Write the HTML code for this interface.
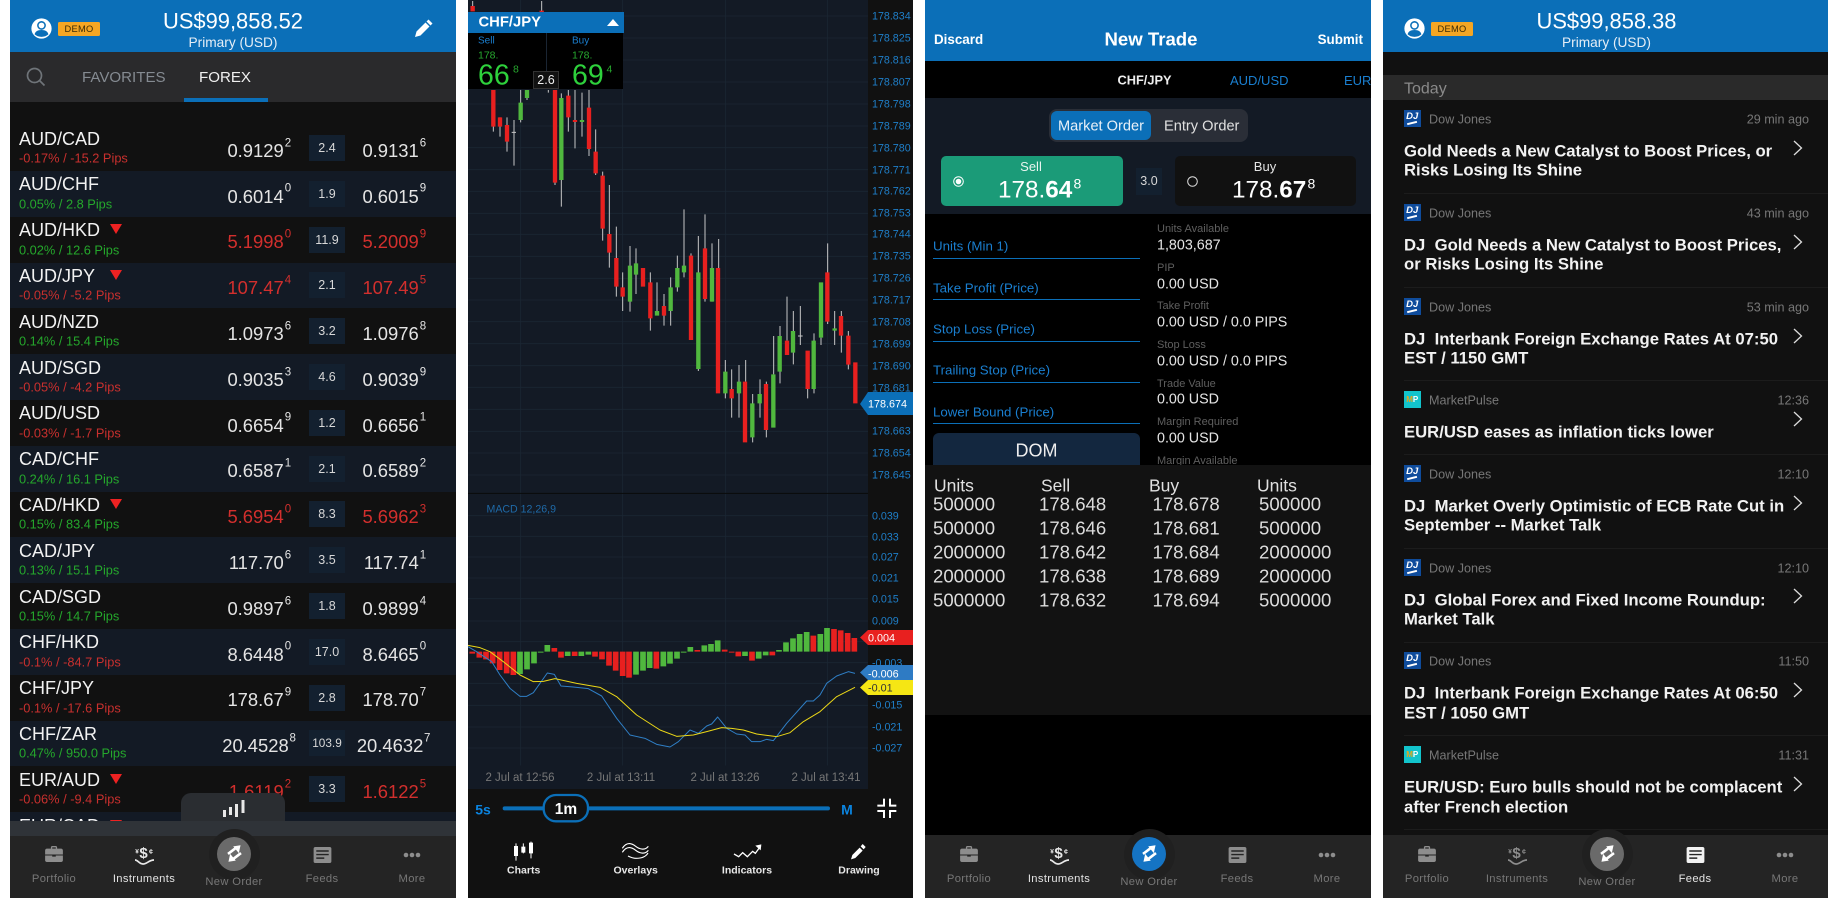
<!DOCTYPE html>
<html lang="en"><head><meta charset="utf-8"><title>Trading app screens</title>
<style>
*{box-sizing:border-box;margin:0;padding:0}
html,body{width:1834px;height:898px;overflow:hidden;background:#fff;font-family:"Liberation Sans",sans-serif}
.pn{position:absolute;top:0;height:898px;overflow:hidden;background:#111}
.t{position:absolute;white-space:nowrap;line-height:1;transform:translateY(calc(-50% + .7px))}
.c{position:absolute;white-space:nowrap;line-height:1;transform:translate(-50%,calc(-50% + .7px))}
.b{position:absolute}
svg{position:absolute;overflow:visible}
.hd{position:absolute;left:0;top:0;width:100%;height:52px;background:#0b6fb8}
.bal{left:223px;top:21px;font-size:21.9px;color:#fff}
.acc{left:223px;top:41.7px;font-size:13.7px;color:#e6eef6}
.demo{position:absolute;left:48px;top:21.5px;width:42px;height:14px;background:#f5a623;border-radius:1.5px;color:#3a2b06;font-size:9.3px;line-height:14px;text-align:center;letter-spacing:.3px}
.r{position:absolute;left:0;width:446px;height:45.8px;background:#111}
.r.a{background:#131a25}
.r .n{position:absolute;left:9px;top:13.4px;font-size:18px;color:#f2f2f2;line-height:1;transform:translateY(-50%);white-space:nowrap}
.r .s{position:absolute;left:9px;top:33.8px;font-size:12.8px;line-height:1;transform:translateY(-50%);white-space:nowrap}
.dn{color:#c9302e}.up{color:#25a82c}
.r .p{position:absolute;top:25.6px;font-size:18.4px;color:#e4e4e4;line-height:1;transform:translateY(-50%);white-space:nowrap}
.r .p1{right:172.3px}.r .p2{right:37.3px}
.r .u{position:absolute;top:18.4px;font-size:11.5px;color:#e4e4e4;line-height:1;transform:translateY(-50%)}
.r .u1{left:274.7px}.r .u2{left:409.7px}
.r .x{position:absolute;left:299px;top:9.8px;width:36px;height:26px;background:#13202f;color:#d8d8d8;font-size:12.5px;line-height:26px;text-align:center}
.r.red .p,.r.red .u{color:#d22f2d}
.r .tri{position:absolute;left:100px;top:7.5px;width:0;height:0;border-left:6.2px solid transparent;border-right:6.2px solid transparent;border-top:10.5px solid #ee2222}
.nav{position:absolute;left:0;top:835px;width:100%;height:63px;background:#242424}
.lb{font-size:11.2px;letter-spacing:.35px;color:#777;top:879px}
.ax{position:absolute;left:404px;font-size:10.7px;color:#1f7fc9;line-height:1;transform:translateY(calc(-50% + 1px))}
.ti{font-size:11.5px;color:#777;top:778px}
.tool{font-size:10.5px;font-weight:bold;color:#e8e8e8;top:870px}
.fl{font-size:13.3px;color:#1a7fd0;left:8px;transform:translateY(-50%)}
.ul{position:absolute;left:8px;width:207px;height:1.5px;background:#0b6fb8}
.il{font-size:11px;color:#5f5f5f;left:232px}
.iv{font-size:14.3px;color:#e4e4e4;left:232px}
.dh{font-size:17.5px;color:#e0e0e0;top:486px;transform:translateY(-50%)}
.dv{font-size:18.6px;color:#dcdcdc;transform:translateY(-50%)}
.src{font-size:12.6px;color:#777}
.tm{font-size:12.6px;color:#777;right:19px}
.nt{font-size:16.7px;font-weight:bold;color:#f2f2f2;left:21px}
.sep{position:absolute;left:21px;right:0;height:1px;background:#1c1c1c}
.dj{position:absolute;left:21px;width:16.5px;height:17px;background:#0f4c9c;color:#fff;font:italic bold 9.5px/13px "Liberation Sans",sans-serif;text-align:center}
.dj::after{content:"";position:absolute;left:3px;top:11.5px;width:10px;height:1.5px;background:#fff;transform:rotate(-14deg)}
.mp{position:absolute;left:21px;width:16.5px;height:17px;background:#12c4cc;color:#fff;font:bold 8px/17px "Liberation Sans",sans-serif;text-align:center}
.mp i{font-style:normal;color:#e8a41c}
</style></head><body>

<svg width="0" height="0" style="position:absolute"><defs>
<symbol id="case" viewBox="0 0 20 18"><path fill="currentColor" d="M6.5 3V1.6C6.5.7 7.2 0 8 0h4c.8 0 1.5.7 1.5 1.6V3H18c1.100 0 2 .9 2 2v4.500H0V5c0-1.100.9-2 2-2zM8 3h4V1.600H8zM0 10.700h8V12h4v-1.300h8V16c0 1.100-.9 2-2 2H2c-1.100 0-2-.9-2-2z"/></symbol>
<symbol id="arr" viewBox="0 0 22 22"><path fill="none" stroke="#fff" stroke-width="3" d="M3.500 11.500L12 5M18.500 10.500L10 17"/><path fill="#fff" d="M18 1.500L16 10.500 9.500 2.800zM4 20.500L6 11.500 12.500 19.200z"/></symbol>
<symbol id="feed" viewBox="0 0 20 18"><rect width="20" height="18" rx="2" fill="currentColor"/><path d="M3 4.500h14M3 8.500h14M3 12.500h9" stroke="#242424" stroke-width="1.600"/></symbol>
<symbol id="usr" viewBox="0 0 22 22"><circle cx="11" cy="11" r="10.600" fill="#fff"/><circle cx="11" cy="7.800" r="3.800" fill="#fff" stroke="#0b6fb8" stroke-width="1.600"/><path d="M3.800 17.200c.6-3 3-4.600 7.200-4.600s6.600 1.600 7.200 4.600c-1.800 1.600-4.400 2.600-7.200 2.600s-5.400-1-7.200-2.600z" fill="#0b6fb8"/></symbol>
<symbol id="bars" viewBox="0 0 24 18"><path d="M1.500 10v7M7.500 7v8M13.500 4v13M20 0v13" stroke="#e8e8e8" stroke-width="3" fill="none"/></symbol>
</defs></svg>

<!-- PANEL 1 -->
<div class="pn" style="left:10px;width:446px;background:#111">
<div class="hd"></div>
<svg style="left:20.500px;top:17.500px" width="21" height="21"><use href="#usr" width="21" height="21"/></svg>
<div class="demo">DEMO</div>
<div class="c bal">US$99,858.52</div>
<div class="c acc">Primary (USD)</div>
<svg style="left:404px;top:18px" width="20" height="20" viewBox="0 0 20 20"><path fill="#fff" d="M14.500 1.500l4 4-2 2-4-4zM11.500 4.500l4 4-9 9-5.500 1.500 1.500-5.500z"/></svg>
<div class="b" style="left:0;top:52px;width:446px;height:50px;background:#2a2a2c"></div>
<svg style="left:16px;top:67px" width="20" height="20" viewBox="0 0 20 20" fill="none" stroke="#6f7479" stroke-width="1.700"><circle cx="8.500" cy="8.500" r="7"/><path d="M13.500 13.500l5 5"/></svg>
<div class="t" style="left:72px;top:77px;font-size:15.100px;color:#858b92">FAVORITES</div>
<div class="t" style="left:189px;top:77px;font-size:15.100px;color:#f0f0f0">FOREX</div>
<div class="b" style="left:174px;top:98px;width:84px;height:4px;background:#0b6fb8"></div>

<div class="r" style="top:125.200px"><div class="n">AUD/CAD</div><div class="s dn">-0.17% / -15.2 Pips</div><div class="p p1">0.9129</div><div class="u u1">2</div><div class="x">2.4</div><div class="p p2">0.9131</div><div class="u u2">6</div></div>
<div class="r a" style="top:171px"><div class="n">AUD/CHF</div><div class="s up">0.05% / 2.8 Pips</div><div class="p p1">0.6014</div><div class="u u1">0</div><div class="x">1.9</div><div class="p p2">0.6015</div><div class="u u2">9</div></div>
<div class="r red" style="top:216.800px"><div class="n">AUD/HKD</div><div class="tri"></div><div class="s up">0.02% / 12.6 Pips</div><div class="p p1">5.1998</div><div class="u u1">0</div><div class="x">11.9</div><div class="p p2">5.2009</div><div class="u u2">9</div></div>
<div class="r a red" style="top:262.600px"><div class="n">AUD/JPY</div><div class="tri"></div><div class="s dn">-0.05% / -5.2 Pips</div><div class="p p1">107.47</div><div class="u u1">4</div><div class="x">2.1</div><div class="p p2">107.49</div><div class="u u2">5</div></div>
<div class="r" style="top:308.400px"><div class="n">AUD/NZD</div><div class="s up">0.14% / 15.4 Pips</div><div class="p p1">1.0973</div><div class="u u1">6</div><div class="x">3.2</div><div class="p p2">1.0976</div><div class="u u2">8</div></div>
<div class="r a" style="top:354.200px"><div class="n">AUD/SGD</div><div class="s dn">-0.05% / -4.2 Pips</div><div class="p p1">0.9035</div><div class="u u1">3</div><div class="x">4.6</div><div class="p p2">0.9039</div><div class="u u2">9</div></div>
<div class="r" style="top:400px"><div class="n">AUD/USD</div><div class="s dn">-0.03% / -1.7 Pips</div><div class="p p1">0.6654</div><div class="u u1">9</div><div class="x">1.2</div><div class="p p2">0.6656</div><div class="u u2">1</div></div>
<div class="r a" style="top:445.800px"><div class="n">CAD/CHF</div><div class="s up">0.24% / 16.1 Pips</div><div class="p p1">0.6587</div><div class="u u1">1</div><div class="x">2.1</div><div class="p p2">0.6589</div><div class="u u2">2</div></div>
<div class="r red" style="top:491.600px"><div class="n">CAD/HKD</div><div class="tri"></div><div class="s up">0.15% / 83.4 Pips</div><div class="p p1">5.6954</div><div class="u u1">0</div><div class="x">8.3</div><div class="p p2">5.6962</div><div class="u u2">3</div></div>
<div class="r a" style="top:537.400px"><div class="n">CAD/JPY</div><div class="s up">0.13% / 15.1 Pips</div><div class="p p1">117.70</div><div class="u u1">6</div><div class="x">3.5</div><div class="p p2">117.74</div><div class="u u2">1</div></div>
<div class="r" style="top:583.200px"><div class="n">CAD/SGD</div><div class="s up">0.15% / 14.7 Pips</div><div class="p p1">0.9897</div><div class="u u1">6</div><div class="x">1.8</div><div class="p p2">0.9899</div><div class="u u2">4</div></div>
<div class="r a" style="top:629px"><div class="n">CHF/HKD</div><div class="s dn">-0.1% / -84.7 Pips</div><div class="p p1">8.6448</div><div class="u u1">0</div><div class="x">17.0</div><div class="p p2">8.6465</div><div class="u u2">0</div></div>
<div class="r" style="top:674.800px"><div class="n">CHF/JPY</div><div class="s dn">-0.1% / -17.6 Pips</div><div class="p p1">178.67</div><div class="u u1">9</div><div class="x">2.8</div><div class="p p2">178.70</div><div class="u u2">7</div></div>
<div class="r a" style="top:720.600px"><div class="n">CHF/ZAR</div><div class="s up">0.47% / 950.0 Pips</div><div class="p p1" style="right:167.300px">20.4528</div><div class="u u1" style="left:279.500px">8</div><div class="x" style="font-size:11.800px">103.9</div><div class="p p2" style="right:32.700px">20.4632</div><div class="u u2" style="left:414px">7</div></div>
<div class="r red" style="top:766.400px"><div class="n">EUR/AUD</div><div class="tri"></div><div class="s dn">-0.06% / -9.4 Pips</div><div class="p p1">1.6119</div><div class="u u1">2</div><div class="x">3.3</div><div class="p p2">1.6122</div><div class="u u2">5</div></div>
<div class="r a" style="top:812.200px"><div class="n">EUR/CAD</div><div class="tri"></div></div>

<div class="b" style="left:171px;top:793px;width:104px;height:29px;background:#2a2d31;border-radius:10px 10px 0 0"></div>
<svg style="left:212.500px;top:800px" width="24" height="18"><use href="#bars" width="24" height="18"/></svg>
<div class="b" style="left:0;top:821px;width:446px;height:15px;background:#2f3338"></div>
<div class="nav" style="top:836px"></div>
<svg style="left:35px;top:846px;color:#8d8d8d" width="18" height="16"><use href="#case" width="18" height="16"/></svg>
<div class="c" style="left:133.500px;top:853px;font-size:15px;font-weight:bold;color:#e8e8e8">$</div>
<div class="c" style="left:127px;top:852px;font-size:6.500px;font-weight:bold;color:#e8e8e8">¥</div>
<div class="c" style="left:141px;top:852px;font-size:7px;font-weight:bold;color:#e8e8e8">¢</div>
<svg style="left:124.500px;top:858px" width="20" height="9" viewBox="0 0 20 9" fill="none" stroke="#e8e8e8" stroke-width="1.700"><path d="M0 2c3 0 4 4 8 4s6-4 11-4"/></svg>
<div class="c lb" style="left:134px;color:#e4e4e4">Instruments</div>
<div class="b" style="left:198.500px;top:829px;width:51px;height:51px;border-radius:50%;background:#202020"></div>
<div class="b" style="left:207px;top:836.500px;width:34px;height:34px;border-radius:50%;background:#6a6a6a"></div>
<svg style="left:214.500px;top:844px" width="19" height="19"><use href="#arr" width="19" height="19"/></svg>
<div class="c lb" style="left:44px">Portfolio</div>
<div class="c lb" style="left:224px;top:882px">New Order</div>
<svg style="left:303px;top:847px;color:#8d8d8d" width="19" height="16"><use href="#feed" width="19" height="16"/></svg>
<div class="c lb" style="left:312px">Feeds</div>
<svg style="left:393px;top:852px" width="18" height="6" fill="#8d8d8d"><circle cx="3" cy="3" r="2.300"/><circle cx="9" cy="3" r="2.300"/><circle cx="15" cy="3" r="2.300"/></svg>
<div class="c lb" style="left:402px">More</div>
</div>

<!-- PANEL 2 -->
<div class="pn" style="left:468px;width:445px;background:#111">
<div class="b" style="left:0;top:0;width:400px;height:789px;background:#131a25"></div>
<svg style="left:-8px;top:0" width="470" height="898" viewBox="0 0 1410 2694">
<defs><clipPath id="cl"><rect x="24" y="0" width="1200" height="2297"/></clipPath></defs>
<g clip-path="url(#cl)">
<path fill="none" stroke="#1b2633" stroke-width="2.500" d="M182 0V2297M488 0V2297M797 0V2297M1102 0V2297M24 48H1224M24 114H1224M24 180H1224M24 246H1224M24 312H1224M24 378H1224M24 443H1224M24 509H1224M24 574H1224M24 640H1224M24 703H1224M24 769H1224M24 835H1224M24 900H1224M24 965H1224M24 1031H1224M24 1097H1224M24 1162H1224M24 1228H1224M24 1294H1224M24 1359H1224M24 1425H1224M24 1547H1224M24 1609H1224M24 1671H1224M24 1734H1224M24 1796H1224M24 1863H1224M24 1925H1224M24 1988H1224M24 2050H1224M24 2116H1224M24 2181H1224M24 2244H1224"/>
<path fill="none" stroke="#0a0a0a" stroke-width="3" d="M24 1480H1224"/>
<path fill="none" stroke="#c6c6c6" stroke-width="3" d="M38 3V18M245 3V35M100 270V395M120 352V410M141 352V455M162 360V497M182 270V367M201 270V300M265 270V278M285 270V555M304 280V620M325 270V395M345 270V445M366 278V410M387 270V468M407 388V525M428 515V722M448 555V803M469 680V890M488 817V933M510 738V935M528 745V882M571 817V992M591 847V935M612 882V977M632 832V977M652 767V875M672 628V832M693 760V1020M715 708V1113M735 643V905M756 730V905M776 717V810M796 1080V1195M815 1108V1253M837 1095V1253M857 1080V1145M878 1182V1327M900 1138V1253M919 1145V1312M941 1008V1123M960 978V1150M981 890V1022M1000 933V1093M1021 918V1035M1043 1167V1195M1062 1000V1180M1083 1013V1035M1103 730V972M1124 933V1035M1144 933V1058M1165 993V1108M155 397H168M1014 1008H1028"/>
<path fill="none" stroke="#e8201f" stroke-width="13" d="M38 18V34M245 32V36M100 270V380M120 352V380M141 375V425M285 270V548M325 287V352M345 360V366M387 323V447M407 455V520M428 527V686M448 702V758M469 774V860M488 862V890M549 804V860M571 847V955M612 918V947M693 767V1020M735 745V897M774 804V1180M815 1167V1195M855 1145V1327M918 1152V1290M981 1022V1065M1043 1052V1167M1102 817V965M1143 948V1007M1165 1007V1094M1186 1087V1210"/>
<path fill="none" stroke="#50b83e" stroke-width="13" d="M182 308V360M201 270V294M304 294V540M366 360V366M510 797V905M528 790V824M591 933V947M632 862V933M652 804V862M672 797V817M715 817V1107M756 804V905M796 1115V1180M837 1145V1180M877 1210V1312M899 1182V1210M940 1123V1283M959 1008V1115M999 993V1058M1061 1022V1167M1083 847V1013M1124 985V992"/>
<g transform="translate(0,1800)">
<path fill="none" stroke="#e8201f" stroke-width="17" d="M37 155V161M58 155V173M78 155V178M98 155V190M119 155V210M140 155V220M160 155V225M283 144V155M303 155V173M344 155V168M405 155V170M426 155V178M447 155V197M467 155V212M488 155V228M507 155V233M589 155V206M712 150V155M794 149V155M815 155V158M835 155V169M876 155V182M937 155V166M1060 107V155M1122 87V155M1142 91V155M1163 99V155M1183 114V155"/>
<path fill="none" stroke="#50b83e" stroke-width="17" d="M180 155V222M201 155V208M222 155V190M242 155V158M262 135V155M323 155V168M364 155V168M385 155V164M528 155V224M549 155V212M569 155V204M610 155V199M630 155V191M651 155V176M671 155V158M691 141V155M733 136V155M753 132V155M773 121V155M855 155V168M896 155V176M917 155V166M957 150V155M978 127V155M999 115V155M1019 102V155M1040 96V155M1081 102V155M1101 84V155"/>
<polyline fill="none" stroke="#2f7fc6" stroke-width="3" stroke-linejoin="round" points="24,140 50,155 95,185 120,225 150,265 180,289 200,289 220,278 262,219 283,223 303,258 340,261 385,266 425,288 470,355 510,405 555,415 590,433 630,441 655,425 690,390 715,400 740,378 755,372 773,351 800,385 830,402 855,405 875,425 900,425 920,418 940,422 980,370 1040,303 1060,303 1080,285 1100,250 1130,228 1165,215 1185,220"/>
<polyline fill="none" stroke="#ecd817" stroke-width="3" stroke-linejoin="round" points="24,136 60,143 90,155 130,185 180,225 220,245 250,244 285,236 350,250 420,262 470,290 530,345 600,390 650,409 700,405 740,395 785,383 815,385 850,390 890,402 950,410 990,398 1030,365 1080,335 1130,290 1185,262"/>
</g></g>
<g transform="translate(0,1800)">
<path fill="none" stroke="#0b6fb8" stroke-width="12" stroke-linecap="round" d="M134 625H1104"/>
<rect x="251" y="585" width="133" height="79" rx="37" fill="#111" stroke="#0b6fb8" stroke-width="7"/>
<path fill="none" stroke="#fff" stroke-width="6" d="M1252 617H1272V596M1290 596V617H1309M1252 633H1272V654M1309 633H1290V654"/>
<path fill="none" stroke="#fff" stroke-width="3" d="M168 730V782M190 730V760M213 725V775"/>
<path fill="#fff" d="M162 738h12v30h-12zM184 740h12v18h-12zM207 728h12v32h-12z"/>
<path fill="none" stroke="#fff" stroke-width="3.500" d="M487 745c14-22 30-14 40-6s28 14 38 0M487 757c14-22 30-14 40-6s28 14 38 0M504 768c8 4 14 7 24 7s28-2 36-16"/>
<path fill="none" stroke="#fff" stroke-width="4" d="M822 762l14 8 12-12 14 12 16-16 8 6 16-22"/>
<path fill="#fff" d="M886 737l18-4-2 18z"/>
<path fill="#fff" d="M1208 732l9 9-6 7-9-9zM1199 743l9 9-22 22-13 4 4-13z"/>
</g>
</svg>

<div class="ax" style="top:16px">178.834</div><div class="ax" style="top:38px">178.825</div><div class="ax" style="top:60px">178.816</div><div class="ax" style="top:82px">178.807</div><div class="ax" style="top:104px">178.798</div><div class="ax" style="top:126px">178.789</div><div class="ax" style="top:147.700px">178.780</div><div class="ax" style="top:169.500px">178.771</div><div class="ax" style="top:191px">178.762</div><div class="ax" style="top:213px">178.753</div><div class="ax" style="top:234px">178.744</div><div class="ax" style="top:256px">178.735</div><div class="ax" style="top:278px">178.726</div><div class="ax" style="top:300px">178.717</div><div class="ax" style="top:322px">178.708</div><div class="ax" style="top:344px">178.699</div><div class="ax" style="top:366px">178.690</div><div class="ax" style="top:387.600px">178.681</div><div class="ax" style="top:431px">178.663</div><div class="ax" style="top:453px">178.654</div><div class="ax" style="top:475px">178.645</div>
<div class="ax" style="top:515.700px">0.039</div><div class="ax" style="top:536.500px">0.033</div><div class="ax" style="top:557px">0.027</div><div class="ax" style="top:578px">0.021</div><div class="ax" style="top:599px">0.015</div><div class="ax" style="top:621px">0.009</div><div class="ax" style="top:663px">-0.003</div><div class="ax" style="top:705px">-0.015</div><div class="ax" style="top:727px">-0.021</div><div class="ax" style="top:748px">-0.027</div>

<svg style="left:392px;top:392px" width="53" height="304" viewBox="0 0 53 304">
<path fill="#0b6fb8" d="M0 12L8 0H53V23H8z"/>
<path fill="#e8201f" d="M0 245.500L8 238H53V253H8z"/>
<path fill="#2e7bc4" d="M0 280.500L8 273H53V288H8z"/>
<path fill="#f5e614" d="M0 295.500L8 288H53V303H8z"/>
</svg>
<div class="t" style="left:400px;top:404px;font-size:10.800px;color:#fff">178.674</div>
<div class="t" style="left:400px;top:638px;font-size:10.800px;color:#fff">0.004</div>
<div class="t" style="left:400px;top:673.500px;font-size:10.800px;color:#fff">-0.006</div>
<div class="t" style="left:400px;top:688px;font-size:10.800px;color:#333">-0.01</div>

<div class="t" style="left:18.500px;top:509px;font-size:10.600px;color:#1f6aa8">MACD 12,26,9</div>
<div class="c ti" style="left:52px">2 Jul at 12:56</div>
<div class="c ti" style="left:153px">2 Jul at 13:11</div>
<div class="c ti" style="left:257px">2 Jul at 13:26</div>
<div class="c ti" style="left:358px">2 Jul at 13:41</div>

<div class="b" style="left:0;top:12px;width:155.500px;height:20.500px;background:#0b6fb8"></div>
<div class="t" style="left:10.500px;top:22px;font-size:14.800px;font-weight:bold;color:#fff">CHF/JPY</div>
<svg style="left:139px;top:19px" width="12" height="7"><path fill="#fff" d="M0 7L6 0l6 7z"/></svg>
<div class="b" style="left:0;top:33px;width:155px;height:56px;background:#000"></div>
<div class="b" style="left:77.500px;top:33px;width:1.500px;height:40px;background:#1a2533"></div>
<div class="t" style="left:10px;top:41px;font-size:10px;color:#1a7fd0">Sell</div>
<div class="t" style="left:10px;top:55px;font-size:10.500px;color:#27a82f">178.</div>
<div class="t" style="left:10px;top:74.500px;font-size:28.500px;color:#2ed13c">66</div>
<div class="t" style="left:45px;top:69px;font-size:10.500px;color:#27a82f">8</div>
<div class="t" style="left:104px;top:41px;font-size:10px;color:#1a7fd0">Buy</div>
<div class="t" style="left:104px;top:55px;font-size:10.500px;color:#27a82f">178.</div>
<div class="t" style="left:104px;top:74.500px;font-size:28.500px;color:#2ed13c">69</div>
<div class="t" style="left:138.500px;top:69px;font-size:10.500px;color:#27a82f">4</div>
<div class="b" style="left:65px;top:71px;width:26px;height:18px;background:#111;border:1px solid #333;color:#eee;font-size:12.500px;line-height:17px;text-align:center">2.6</div>

<div class="c" style="left:15px;top:809px;font-size:14px;font-weight:bold;color:#0b84e0">5s</div>
<div class="c" style="left:98px;top:809px;font-size:15.500px;font-weight:bold;color:#fff">1m</div>
<div class="c" style="left:379px;top:809px;font-size:14px;font-weight:bold;color:#0b84e0">M</div>
<div class="c tool" style="left:55.700px">Charts</div>
<div class="c tool" style="left:167.700px">Overlays</div>
<div class="c tool" style="left:279px">Indicators</div>
<div class="c tool" style="left:391px">Drawing</div>
</div>

<!-- PANEL 3 -->
<div class="pn" style="left:925px;width:446px;background:#000">
<div class="b" style="left:0;top:0;width:446px;height:61px;background:#0b6fb8"></div>
<div class="t" style="left:9px;top:39px;font-size:13.400px;font-weight:bold;color:#fff">Discard</div>
<div class="c" style="left:226px;top:39px;font-size:18.600px;font-weight:bold;color:#fff">New Trade</div>
<div class="t" style="right:8px;top:39px;font-size:13.400px;font-weight:bold;color:#fff">Submit</div>
<div class="t" style="left:192.500px;top:80px;font-size:12.800px;font-weight:bold;color:#eee">CHF/JPY</div>
<div class="t" style="left:305px;top:80px;font-size:13px;color:#1a7fd0">AUD/USD</div>
<div class="t" style="left:419px;top:80px;font-size:13px;color:#1a7fd0">EUR/USD</div>
<div class="b" style="left:0;top:98px;width:446px;height:116px;background:#131a25"></div>
<div class="b" style="left:124px;top:109px;width:199px;height:33px;background:#2a2e37;border-radius:8px"></div>
<div class="b" style="left:126px;top:111px;width:100px;height:29px;background:#0b6fb8;border-radius:6px"></div>
<div class="c" style="left:176px;top:126px;font-size:14.600px;color:#e8f0f8">Market Order</div>
<div class="t" style="left:239px;top:126px;font-size:14.600px;color:#e0e0e0">Entry Order</div>
<div class="b" style="left:16px;top:155.500px;width:181.500px;height:50.500px;background:#1b9b78;border-radius:5px"></div>
<div class="c" style="left:106px;top:165.500px;font-size:13px;color:#e8f5f0">Sell</div>
<svg style="left:27.500px;top:175.500px" width="11" height="11" fill="none"><circle cx="5.500" cy="5.500" r="4.800" stroke="#fff"/><circle cx="5.500" cy="5.500" r="2.800" fill="#fff"/></svg>
<div class="t" style="left:73px;top:190px;font-size:24.300px;color:#fff">178.<b>64</b></div>
<div class="t" style="left:148.500px;top:183px;font-size:14px;color:#fff">8</div>
<div class="b" style="left:211px;top:168px;width:26px;height:27px;background:#13202f;color:#d8d8d8;font-size:12.500px;line-height:27px;text-align:center">3.0</div>
<div class="b" style="left:249.500px;top:155.500px;width:181.500px;height:50.500px;background:#111;border-radius:5px"></div>
<div class="c" style="left:340px;top:165.500px;font-size:13px;color:#e4e4e4">Buy</div>
<svg style="left:261.500px;top:175.500px" width="11" height="11" fill="none"><circle cx="5.500" cy="5.500" r="4.800" stroke="#ddd"/></svg>
<div class="t" style="left:307px;top:190px;font-size:24.300px;color:#fff">178.<b>67</b></div>
<div class="t" style="left:382.500px;top:183px;font-size:14px;color:#fff">8</div>

<div class="t fl" style="top:246px">Units (Min 1)</div><div class="ul" style="top:257.500px"></div>
<div class="t fl" style="top:287.500px">Take Profit (Price)</div><div class="ul" style="top:298.500px"></div>
<div class="t fl" style="top:329px">Stop Loss (Price)</div><div class="ul" style="top:340.500px"></div>
<div class="t fl" style="top:370px">Trailing Stop (Price)</div><div class="ul" style="top:381.500px"></div>
<div class="t fl" style="top:411.500px">Lower Bound (Price)</div><div class="ul" style="top:422.500px"></div>
<div class="b" style="left:8px;top:432.500px;width:207px;height:40px;background:#13273f;border-radius:6px 6px 0 0"></div>
<div class="c" style="left:111.500px;top:450px;font-size:18px;color:#eee">DOM</div>

<div class="t il" style="top:229px">Units Available</div><div class="t iv" style="top:245px">1,803,687</div>
<div class="t il" style="top:267.500px">PIP</div><div class="t iv" style="top:283.500px">0.00 USD</div>
<div class="t il" style="top:306px">Take Profit</div><div class="t iv" style="top:322px">0.00 USD / 0.0 PIPS</div>
<div class="t il" style="top:345px">Stop Loss</div><div class="t iv" style="top:360.500px">0.00 USD / 0.0 PIPS</div>
<div class="t il" style="top:383.500px">Trade Value</div><div class="t iv" style="top:399px">0.00 USD</div>
<div class="t il" style="top:422px">Margin Required</div><div class="t iv" style="top:437.500px">0.00 USD</div>
<div class="t il" style="top:461px">Margin Available</div>

<div class="b" style="left:0;top:465px;width:446px;height:250px;background:#121212"></div>
<div class="t dh" style="left:9px">Units</div><div class="t dh" style="left:116px">Sell</div><div class="t dh" style="left:224px">Buy</div><div class="t dh" style="left:332px">Units</div>
<div class="t dv" style="left:8px;top:504.500px">500000</div><div class="t dv" style="left:114px;top:504.500px">178.648</div><div class="t dv" style="left:227.500px;top:504.500px">178.678</div><div class="t dv" style="left:334px;top:504.500px">500000</div>
<div class="t dv" style="left:8px;top:528.500px">500000</div><div class="t dv" style="left:114px;top:528.500px">178.646</div><div class="t dv" style="left:227.500px;top:528.500px">178.681</div><div class="t dv" style="left:334px;top:528.500px">500000</div>
<div class="t dv" style="left:8px;top:552.500px">2000000</div><div class="t dv" style="left:114px;top:552.500px">178.642</div><div class="t dv" style="left:227.500px;top:552.500px">178.684</div><div class="t dv" style="left:334px;top:552.500px">2000000</div>
<div class="t dv" style="left:8px;top:576.500px">2000000</div><div class="t dv" style="left:114px;top:576.500px">178.638</div><div class="t dv" style="left:227.500px;top:576.500px">178.689</div><div class="t dv" style="left:334px;top:576.500px">2000000</div>
<div class="t dv" style="left:8px;top:600.500px">5000000</div><div class="t dv" style="left:114px;top:600.500px">178.632</div><div class="t dv" style="left:227.500px;top:600.500px">178.694</div><div class="t dv" style="left:334px;top:600.500px">5000000</div>

<div class="nav"></div>
<svg style="left:35px;top:846px;color:#8d8d8d" width="18" height="16"><use href="#case" width="18" height="16"/></svg>
<div class="c" style="left:133.500px;top:853px;font-size:15px;font-weight:bold;color:#e8e8e8">$</div>
<div class="c" style="left:127px;top:852px;font-size:6.500px;font-weight:bold;color:#e8e8e8">¥</div>
<div class="c" style="left:141px;top:852px;font-size:7px;font-weight:bold;color:#e8e8e8">¢</div>
<svg style="left:124.500px;top:858px" width="20" height="9" viewBox="0 0 20 9" fill="none" stroke="#e8e8e8" stroke-width="1.700"><path d="M0 2c3 0 4 4 8 4s6-4 11-4"/></svg>
<div class="c lb" style="left:134px;color:#e4e4e4">Instruments</div>
<div class="b" style="left:198.500px;top:829px;width:51px;height:51px;border-radius:50%;background:#202020"></div>
<div class="b" style="left:207px;top:836.500px;width:34px;height:34px;border-radius:50%;background:#1574c4"></div>
<svg style="left:214.500px;top:844px" width="19" height="19"><use href="#arr" width="19" height="19"/></svg>
<div class="c lb" style="left:44px">Portfolio</div>
<div class="c lb" style="left:224px;top:882px">New Order</div>
<svg style="left:303px;top:847px;color:#8d8d8d" width="19" height="16"><use href="#feed" width="19" height="16"/></svg>
<div class="c lb" style="left:312px">Feeds</div>
<svg style="left:393px;top:852px" width="18" height="6" fill="#8d8d8d"><circle cx="3" cy="3" r="2.300"/><circle cx="9" cy="3" r="2.300"/><circle cx="15" cy="3" r="2.300"/></svg>
<div class="c lb" style="left:402px">More</div>
</div>

<!-- PANEL 4 -->
<div class="pn" style="left:1383px;width:445px;background:#111">
<div class="hd"></div>
<svg style="left:20.500px;top:17.500px" width="21" height="21"><use href="#usr" width="21" height="21"/></svg>
<div class="demo">DEMO</div>
<div class="c bal" style="left:223.500px">US$99,858.38</div>
<div class="c acc" style="left:223.500px">Primary (USD)</div>
<div class="b" style="left:0;top:75px;width:445px;height:25px;background:#2a2a2a"></div>
<div class="t" style="left:21px;top:88.500px;font-size:16px;color:#8a8a8a">Today</div>

<div class="dj" style="top:110px">DJ</div><div class="t src" style="left:46px;top:119px">Dow Jones</div><div class="t tm" style="top:119px">29 min ago</div>
<div class="t nt" style="top:150.500px">Gold Needs a New Catalyst to Boost Prices, or</div><div class="t nt" style="top:170px">Risks Losing Its Shine</div>
<svg style="left:410px;top:140px" width="10" height="16" fill="none" stroke="#ddd" stroke-width="1.300"><path d="M1 1l7.500 7L1 15"/></svg>
<div class="sep" style="top:193px"></div>

<div class="dj" style="top:204px">DJ</div><div class="t src" style="left:46px;top:213px">Dow Jones</div><div class="t tm" style="top:213px">43 min ago</div>
<div class="t nt" style="top:244.500px">DJ&nbsp; Gold Needs a New Catalyst to Boost Prices,</div><div class="t nt" style="top:264px">or Risks Losing Its Shine</div>
<svg style="left:410px;top:234px" width="10" height="16" fill="none" stroke="#ddd" stroke-width="1.300"><path d="M1 1l7.500 7L1 15"/></svg>
<div class="sep" style="top:287px"></div>

<div class="dj" style="top:298px">DJ</div><div class="t src" style="left:46px;top:307px">Dow Jones</div><div class="t tm" style="top:307px">53 min ago</div>
<div class="t nt" style="top:338.500px">DJ&nbsp; Interbank Foreign Exchange Rates At 07:50</div><div class="t nt" style="top:358px">EST / 1150 GMT</div>
<svg style="left:410px;top:328px" width="10" height="16" fill="none" stroke="#ddd" stroke-width="1.300"><path d="M1 1l7.500 7L1 15"/></svg>
<div class="sep" style="top:380px"></div>

<div class="mp" style="top:391px"><i>M</i>P</div><div class="t src" style="left:46px;top:400px">MarketPulse</div><div class="t tm" style="top:400px">12:36</div>
<div class="t nt" style="top:432px">EUR/USD eases as inflation ticks lower</div>
<svg style="left:410px;top:411px" width="10" height="16" fill="none" stroke="#ddd" stroke-width="1.300"><path d="M1 1l7.500 7L1 15"/></svg>
<div class="sep" style="top:454px"></div>

<div class="dj" style="top:465px">DJ</div><div class="t src" style="left:46px;top:474px">Dow Jones</div><div class="t tm" style="top:474px">12:10</div>
<div class="t nt" style="top:505.500px">DJ&nbsp; Market Overly Optimistic of ECB Rate Cut in</div><div class="t nt" style="top:525px">September -- Market Talk</div>
<svg style="left:410px;top:495px" width="10" height="16" fill="none" stroke="#ddd" stroke-width="1.300"><path d="M1 1l7.500 7L1 15"/></svg>
<div class="sep" style="top:548px"></div>

<div class="dj" style="top:559px">DJ</div><div class="t src" style="left:46px;top:568px">Dow Jones</div><div class="t tm" style="top:568px">12:10</div>
<div class="t nt" style="top:599.500px">DJ&nbsp; Global Forex and Fixed Income Roundup:</div><div class="t nt" style="top:619px">Market Talk</div>
<svg style="left:410px;top:588px" width="10" height="16" fill="none" stroke="#ddd" stroke-width="1.300"><path d="M1 1l7.500 7L1 15"/></svg>
<div class="sep" style="top:642px"></div>

<div class="dj" style="top:652px">DJ</div><div class="t src" style="left:46px;top:661px">Dow Jones</div><div class="t tm" style="top:661px">11:50</div>
<div class="t nt" style="top:693px">DJ&nbsp; Interbank Foreign Exchange Rates At 06:50</div><div class="t nt" style="top:713px">EST / 1050 GMT</div>
<svg style="left:410px;top:682px" width="10" height="16" fill="none" stroke="#ddd" stroke-width="1.300"><path d="M1 1l7.500 7L1 15"/></svg>
<div class="sep" style="top:735px"></div>

<div class="mp" style="top:746px"><i>M</i>P</div><div class="t src" style="left:46px;top:755px">MarketPulse</div><div class="t tm" style="top:755px">11:31</div>
<div class="t nt" style="top:787px">EUR/USD: Euro bulls should not be complacent</div><div class="t nt" style="top:807px">after French election</div>
<svg style="left:410px;top:776px" width="10" height="16" fill="none" stroke="#ddd" stroke-width="1.300"><path d="M1 1l7.500 7L1 15"/></svg>
<div class="sep" style="top:829px"></div>

<div class="nav"></div>
<svg style="left:35px;top:846px;color:#8d8d8d" width="18" height="16"><use href="#case" width="18" height="16"/></svg>
<div class="c" style="left:133.500px;top:853px;font-size:15px;font-weight:bold;color:#8d8d8d">$</div>
<div class="c" style="left:127px;top:852px;font-size:6.500px;font-weight:bold;color:#8d8d8d">¥</div>
<div class="c" style="left:141px;top:852px;font-size:7px;font-weight:bold;color:#8d8d8d">¢</div>
<svg style="left:124.500px;top:858px" width="20" height="9" viewBox="0 0 20 9" fill="none" stroke="#8d8d8d" stroke-width="1.700"><path d="M0 2c3 0 4 4 8 4s6-4 11-4"/></svg>
<div class="c lb" style="left:134px">Instruments</div>
<div class="b" style="left:198.500px;top:829px;width:51px;height:51px;border-radius:50%;background:#202020"></div>
<div class="b" style="left:207px;top:836.500px;width:34px;height:34px;border-radius:50%;background:#6a6a6a"></div>
<svg style="left:214.500px;top:844px" width="19" height="19"><use href="#arr" width="19" height="19"/></svg>
<div class="c lb" style="left:44px">Portfolio</div>
<div class="c lb" style="left:224px;top:882px">New Order</div>
<svg style="left:303px;top:847px;color:#f2f2f2" width="19" height="16"><use href="#feed" width="19" height="16"/></svg>
<div class="c lb" style="left:312px;color:#e4e4e4">Feeds</div>
<svg style="left:393px;top:852px" width="18" height="6" fill="#8d8d8d"><circle cx="3" cy="3" r="2.300"/><circle cx="9" cy="3" r="2.300"/><circle cx="15" cy="3" r="2.300"/></svg>
<div class="c lb" style="left:402px">More</div>
</div>
</body></html>
